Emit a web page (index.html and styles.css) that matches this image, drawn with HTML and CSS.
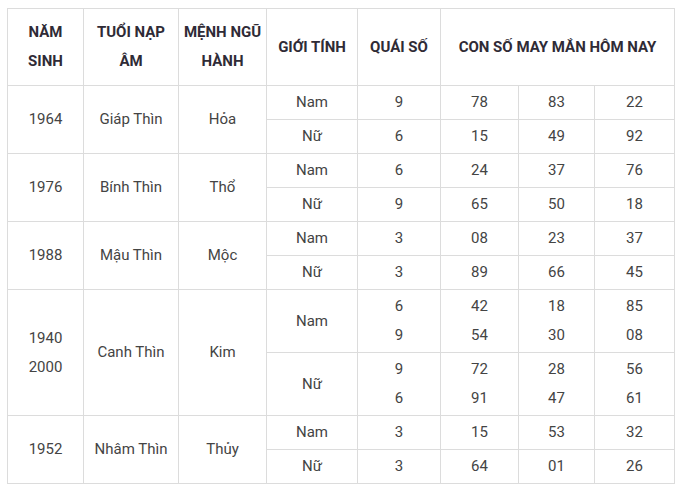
FILE: index.html
```html
<!DOCTYPE html>
<html lang="vi">
<head>
<meta charset="utf-8">
<link rel="stylesheet" href="styles.css">
</head>
<body>
<table class="luck">
  <colgroup>
    <col class="c1"><col class="c2"><col class="c3"><col class="c4"><col class="c5"><col class="c6"><col class="c7"><col class="c8">
  </colgroup>
  <thead>
    <tr class="head">
      <th>NĂM<br>SINH</th>
      <th>TUỔI NẠP<br>ÂM</th>
      <th>MỆNH NGŨ<br>HÀNH</th>
      <th>GIỚI TÍNH</th>
      <th>QUÁI SỐ</th>
      <th colspan="3">CON SỐ MAY MẮN HÔM NAY</th>
    </tr>
  </thead>
  <tbody>
    <tr class="r"><td rowspan="2">1964</td><td rowspan="2">Giáp Thìn</td><td rowspan="2">Hỏa</td><td>Nam</td><td>9</td><td>78</td><td>83</td><td>22</td></tr>
    <tr class="r"><td>Nữ</td><td>6</td><td>15</td><td>49</td><td>92</td></tr>
    <tr class="r"><td rowspan="2">1976</td><td rowspan="2">Bính Thìn</td><td rowspan="2">Thổ</td><td>Nam</td><td>6</td><td>24</td><td>37</td><td>76</td></tr>
    <tr class="r"><td>Nữ</td><td>9</td><td>65</td><td>50</td><td>18</td></tr>
    <tr class="r"><td rowspan="2">1988</td><td rowspan="2">Mậu Thìn</td><td rowspan="2">Mộc</td><td>Nam</td><td>3</td><td>08</td><td>23</td><td>37</td></tr>
    <tr class="r"><td>Nữ</td><td>3</td><td>89</td><td>66</td><td>45</td></tr>
    <tr class="r2"><td rowspan="2">1940<br>2000</td><td rowspan="2">Canh Thìn</td><td rowspan="2">Kim</td><td>Nam</td><td>6<br>9</td><td>42<br>54</td><td>18<br>30</td><td>85<br>08</td></tr>
    <tr class="r2"><td>Nữ</td><td>9<br>6</td><td>72<br>91</td><td>28<br>47</td><td>56<br>61</td></tr>
    <tr class="r"><td rowspan="2">1952</td><td rowspan="2">Nhâm Thìn</td><td rowspan="2">Thủy</td><td>Nam</td><td>3</td><td>15</td><td>53</td><td>32</td></tr>
    <tr class="r"><td>Nữ</td><td>3</td><td>64</td><td>01</td><td>26</td></tr>
  </tbody>
</table>
</body>
</html>
```
FILE: styles.css
```css
html, body {
  background: #ffffff;
}
body {
  margin: 8px 0 0 7px;
  font-family: Roboto, "Liberation Sans", sans-serif;
}
.luck {
  border-collapse: collapse;
  table-layout: fixed;
  width: 668px;
  font-size: 15px;
  line-height: 29px;
  color: #444;
}
.c1 { width: 76px; }
.c2 { width: 95px; }
.c3 { width: 88px; }
.c4 { width: 91px; }
.c5 { width: 83px; }
.c6 { width: 78px; }
.c7 { width: 76px; }
.c8 { width: 80px; }
.luck th,
.luck td {
  border: 1px solid #dcdcdc;
  padding: 0 2px;
  text-align: center;
  vertical-align: middle;
}
.luck th {
  font-weight: 700;
  color: #2f2b36;
}
.head { height: 77px; }
.r { height: 34px; }
.r2 { height: 63px; }
```
